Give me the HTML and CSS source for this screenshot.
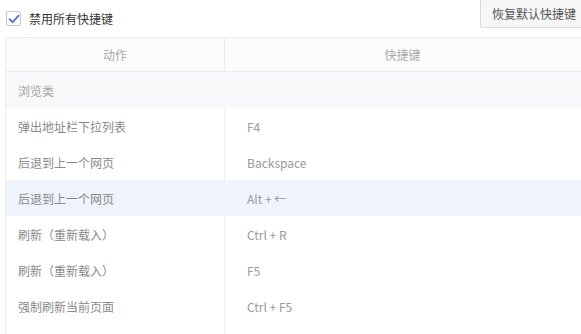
FILE: index.html
```html
<!DOCTYPE html>
<html lang="zh-CN">
<head>
    <meta charset="UTF-8">
    <title>快捷键</title>
    <link rel="stylesheet" href="styles.css">
</head>
<body>
    <div class="page">
        <div class="topbar">
            <label class="check">
                <span class="box">
                    <svg width="12" height="10" viewBox="0 0 12 10"><path d="M1.5 5.2 L4.6 8.2 L10.6 1.6" fill="none" stroke="#4a78cc" stroke-width="1.8" stroke-linecap="round" stroke-linejoin="round"/></svg>
                </span>
                禁用所有快捷键
            </label>
            <button class="reset">恢复默认快捷键</button>
        </div>

        <div class="table">
            <div class="head">
                <div class="cell first">动作</div>
                <div class="cell">快捷键</div>
            </div>
            <div class="group">浏览类</div>
            <div class="row">
                <div class="cell first">弹出地址栏下拉列表</div>
                <div class="cell key">F4</div>
            </div>
            <div class="row">
                <div class="cell first">后退到上一个网页</div>
                <div class="cell key">Backspace</div>
            </div>
            <div class="row active">
                <div class="cell first">后退到上一个网页</div>
                <div class="cell key">Alt + ←</div>
            </div>
            <div class="row">
                <div class="cell first">刷新（重新载入）</div>
                <div class="cell key">Ctrl + R</div>
            </div>
            <div class="row">
                <div class="cell first">刷新（重新载入）</div>
                <div class="cell key">F5</div>
            </div>
            <div class="row">
                <div class="cell first">强制刷新当前页面</div>
                <div class="cell key">Ctrl + F5</div>
            </div>
            <div class="row">
                <div class="cell first"></div>
                <div class="cell key"></div>
            </div>
        </div>
    </div>
</body>
</html>
```

FILE: styles.css
```css
body {
    margin: 0;
    padding: 0;
    background: #fff;
    font-family: "Noto Sans CJK SC", "Noto Sans", sans-serif;
    font-size: 12px;
    color: #8a8a8a;
    overflow: hidden;
}
.page {
    width: 590px;
    height: 334px;
    overflow: hidden;
}
.topbar {
    display: flex;
    justify-content: space-between;
    align-items: flex-start;
    height: 37px;
    padding-left: 6px;
}
.check {
    display: flex;
    align-items: center;
    margin-top: 11px;
    color: #333;
    font-size: 12px;
    line-height: 14px;
}
.box {
    display: flex;
    align-items: center;
    justify-content: center;
    width: 13px;
    height: 13px;
    border: 1px solid #c8c8c8;
    border-radius: 2px;
    background: #fff;
    margin-right: 8px;
}
.reset {
    margin-top: -1px;
    height: 29px;
    padding: 0 13px 0 11px;
    border: 1px solid #dcdcdc;
    border-radius: 2px;
    background: #f6f6f6;
    color: #555;
    font-family: inherit;
    font-size: 12px;
}
.table {
    margin-left: 5px;
    border-left: 1px solid #ececec;
    border-top: 1px solid #ececec;
}
.head {
    display: grid;
    grid-template-columns: 219px 1fr;
    height: 33px;
    border-bottom: 1px solid #ececec;
    background: #fcfcfc;
    color: #a8a8a8;
}
.head .cell {
    display: flex;
    align-items: center;
    justify-content: center;
    padding-right: 10px;
}
.head .first {
    border-right: 1px solid #ececec;
    padding-right: 0;
}
.group {
    display: flex;
    align-items: center;
    height: 36px;
    padding-left: 12px;
    background: #f7f8fa;
    color: #a5a5a5;
}
.row {
    display: grid;
    grid-template-columns: 219px 1fr;
    height: 36px;
}
.row .cell {
    display: flex;
    align-items: center;
    padding-left: 22px;
}
.row .first {
    padding-left: 12px;
    border-right: 1px solid #f0f0f0;
}
.row .key {
    color: #999;
}
.row.active {
    background: #eff3fb;
}
.row.active .first {
    border-right-color: transparent;
}
```
